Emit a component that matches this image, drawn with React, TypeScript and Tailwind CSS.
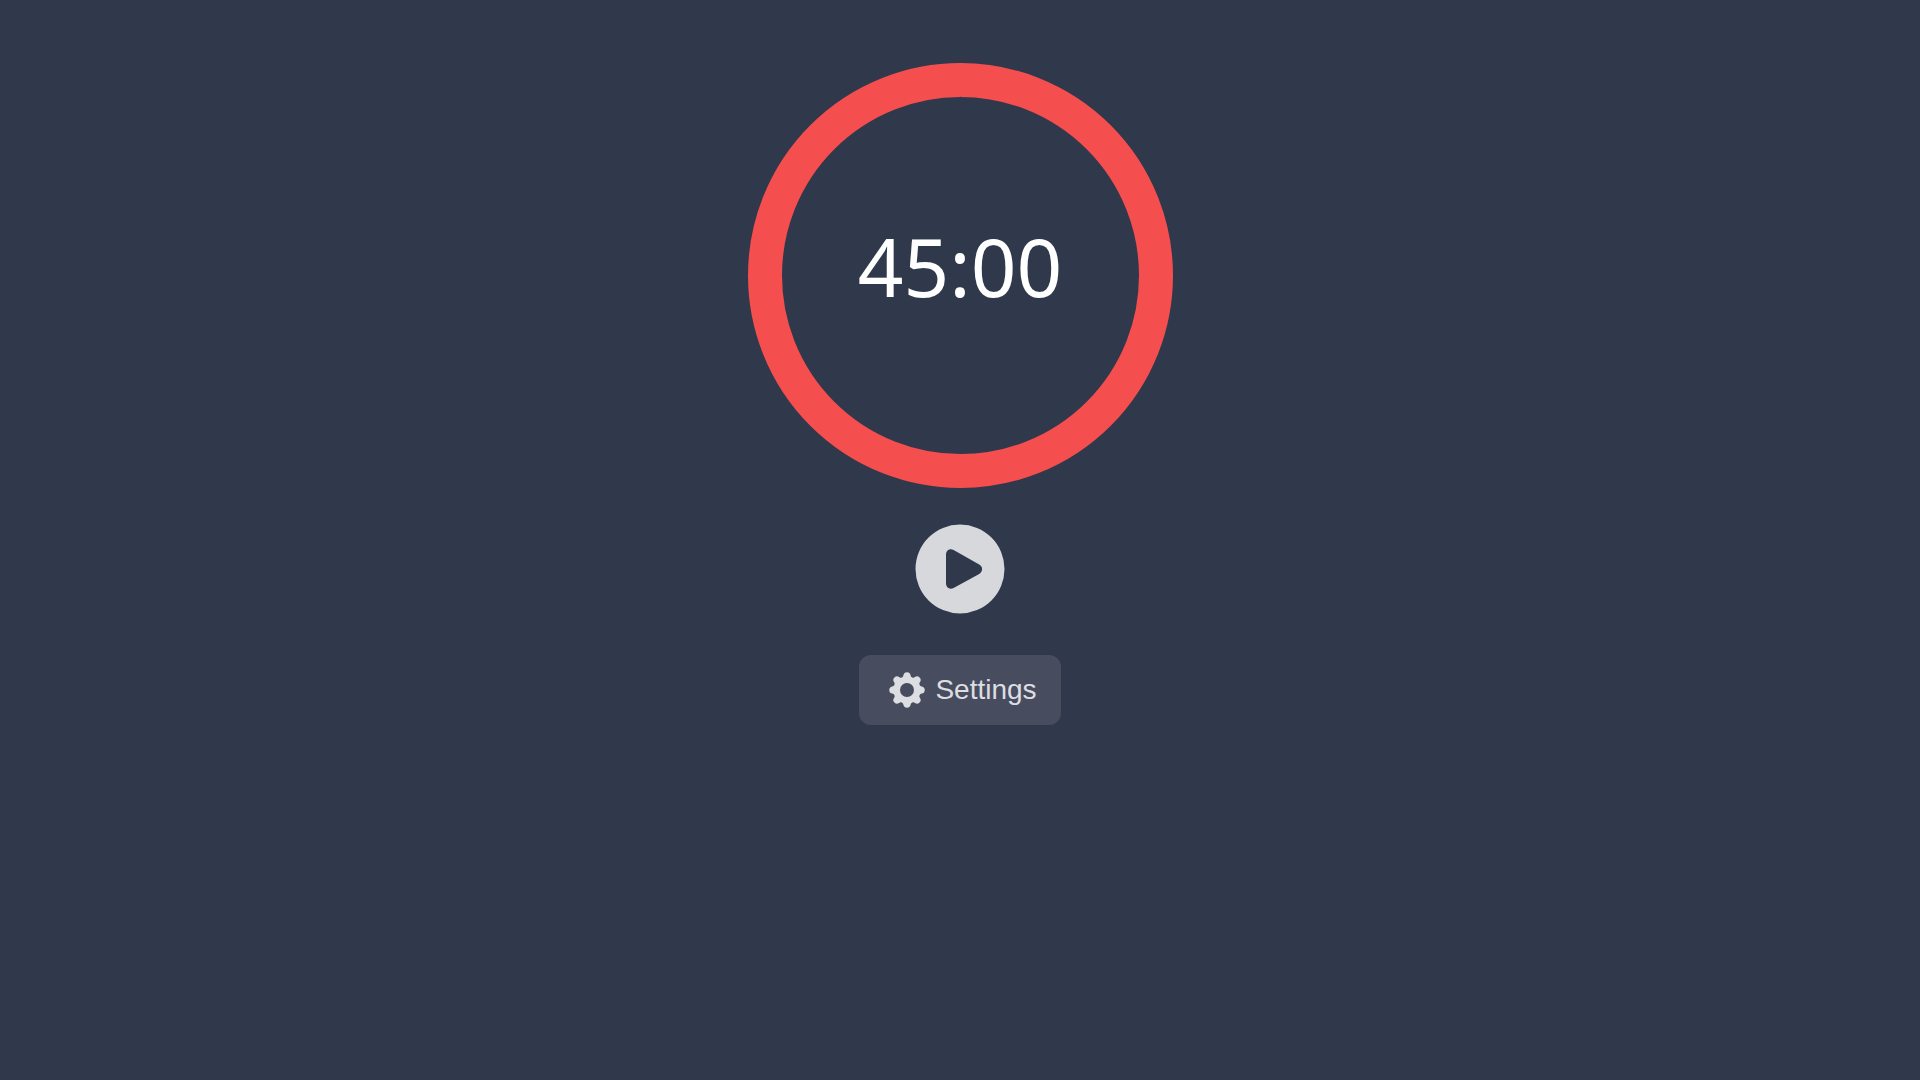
const MINUTES = 45;
const SECONDS = 0;

const RADIUS = 46;
const CIRCUMFERENCE = 2 * Math.PI * RADIUS;

function pad(value: number) {
  return String(value).padStart(2, "0");
}

function TimerRing({ progress }: { progress: number }) {
  return (
    <div className="grid w-[425px] place-items-center">
      <svg viewBox="0 0 100 100" className="col-start-1 row-start-1 w-full" aria-hidden="true">
        <circle
          cx="50"
          cy="50"
          r={RADIUS}
          fill="none"
          stroke="#f54e4e"
          strokeWidth="8"
          strokeDasharray={CIRCUMFERENCE}
          strokeDashoffset={CIRCUMFERENCE * (1 - progress)}
          transform="rotate(-90 50 50)"
        />
      </svg>
      <p
        role="timer"
        className="col-start-1 row-start-1 pb-5 font-['Noto_Sans','Open_Sans',sans-serif] text-[80px] leading-none text-white"
      >
        {pad(MINUTES)}:{pad(SECONDS)}
      </p>
    </div>
  );
}

function PlayButton() {
  return (
    <button type="button" aria-label="Play" className="rounded-full">
      <svg viewBox="0 0 90 90" className="size-[90px]" aria-hidden="true">
        <path
          fill="#d6d8dc"
          fillRule="evenodd"
          d="M45 .5a44.500 44.500 0 1 1 0 89a44.500 44.500 0 1 1 0-89ZM31 31v28c0 4.800 3.800 7 7.600 4.900l25.600-14c3.900-2.200 3.900-7.200 0-9.400L38.600 26C34.800 24 31 26.200 31 31Z"
        />
      </svg>
    </button>
  );
}

function GearIcon() {
  return (
    <svg viewBox="-20 -20 40 40" className="size-10" fill="currentColor" fillRule="evenodd" aria-hidden="true">
      <path
        d="M14.8-3.58A3.65 3.65 0 0 1 14.8 3.58A2.6 2.6 0 0 0 13 7.93
          A3.65 3.65 0 0 1 7.93 13A2.6 2.6 0 0 0 3.58 14.8
          A3.65 3.65 0 0 1-3.58 14.8A2.6 2.6 0 0 0-7.93 13
          A3.65 3.65 0 0 1-13 7.93A2.6 2.6 0 0 0-14.8 3.58
          A3.65 3.65 0 0 1-14.8-3.58A2.6 2.6 0 0 0-13-7.93
          A3.65 3.65 0 0 1-7.93-13A2.6 2.6 0 0 0-3.58-14.8
          A3.65 3.65 0 0 1 3.58-14.8A2.6 2.6 0 0 0 7.93-13
          A3.65 3.65 0 0 1 13-7.93A2.6 2.6 0 0 0 14.8-3.58Z
          M7 0A7 7 0 1 0-7 0A7 7 0 1 0 7 0Z"
      />
    </svg>
  );
}

export default function App() {
  return (
    <main className="flex min-h-screen flex-col items-center bg-[#30384b] pt-[63px]">
      <TimerRing progress={1} />
      <div className="mt-9 flex">
        <PlayButton />
      </div>
      <button
        type="button"
        className="mt-[41px] flex h-[70px] items-center gap-2 rounded-xl bg-[#474d5f] pr-6 pl-7 font-['Liberation_Sans',Arial,sans-serif] text-[28px] text-[#dddee2]"
      >
        <GearIcon />
        Settings
      </button>
    </main>
  );
}
